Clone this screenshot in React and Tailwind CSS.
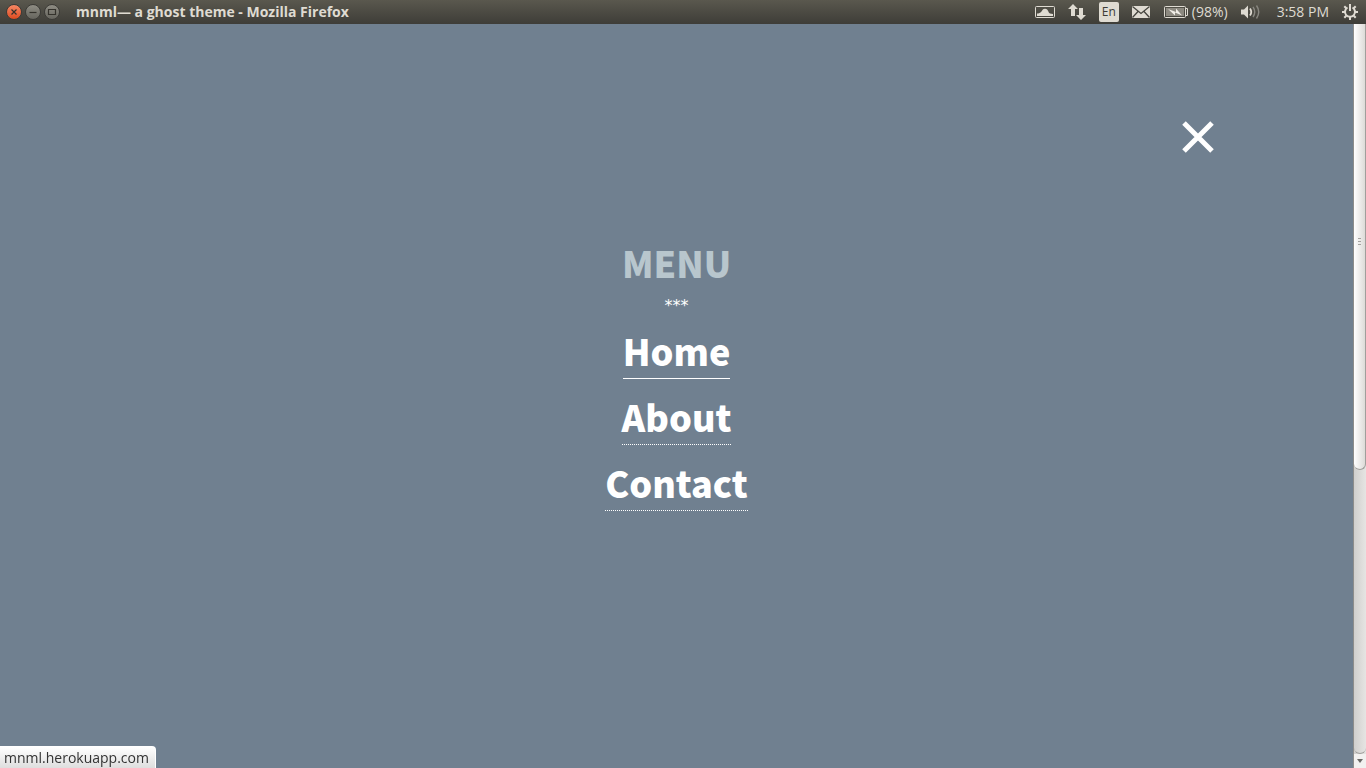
const links = [
  { label: 'Home', line: 'border-solid' },
  { label: 'About', line: 'border-dotted' },
  { label: 'Contact', line: 'border-dotted' },
];

function WindowButton({ label, tone, children }) {
  return (
    <button
      type="button"
      aria-label={label}
      className={`flex size-4 items-center justify-center rounded-full border bg-linear-to-b ${tone}`}
    >
      <svg viewBox="0 0 14 14" className="size-3.5 shrink-0" fill="none" stroke="#34322c" strokeWidth="1.2">
        {children}
      </svg>
    </button>
  );
}

function TopBar() {
  return (
    <header className="flex h-6 shrink-0 items-center justify-between bg-linear-to-b from-[#5a584e] to-[#3e3d38] pr-[7px] pl-1.5 font-['Open_Sans','Noto_Sans',sans-serif] text-sm leading-6 text-[#dfdbd2]">
      <div className="flex items-center">
        <div className="flex gap-[3px]">
          <WindowButton label="Close window" tone="border-[#3c3b37] from-[#f58763] to-[#dd4a1d]">
            <path d="M4.500 4.500l5 5M9.500 4.500l-5 5" />
          </WindowButton>
          <WindowButton label="Minimize window" tone="border-[#3c3b37] from-[#8f8d84] to-[#66655e]">
            <path d="M3.500 7.500h7" />
          </WindowButton>
          <WindowButton label="Maximize window" tone="border-[#3c3b37] from-[#8f8d84] to-[#66655e]">
            <path d="M3.500 4.500h7v5h-7z" />
          </WindowButton>
        </div>
        <h1 className="ml-4 font-bold whitespace-nowrap">mnml— a ghost theme - Mozilla Firefox</h1>
      </div>
      <div className="flex items-center whitespace-nowrap">
        <svg viewBox="0 0 20 14" className="h-3.5 w-5" aria-hidden="true">
          <rect x="0.500" y="1.500" width="19" height="11" rx="1" fill="none" stroke="#dfdbd2" />
          <path d="M2 8.500C4 8.500 5 8 6.500 6.500C8 4 9 3.500 11 4C13.500 4.500 13 7.500 15 8.500L18 9V11H2z" fill="#dfdbd2" />
        </svg>
        <svg viewBox="0 0 18 18" className="ml-[13px] size-[18px]" fill="#dfdbd2" aria-hidden="true">
          <path d="M5 1l5 5H7v7H3V6H0zM13 17l-5-5h3V5h4v7h3z" />
        </svg>
        <span className="ml-[13px] flex h-5 w-5 items-center justify-center rounded-xs bg-[#dfdbd2] text-xs text-[#3c3b37]">En</span>
        <svg viewBox="0 0 20 14" className="ml-3 h-3.5 w-5" aria-hidden="true">
          <rect x="1" y="1" width="18" height="12" fill="#dfdbd2" />
          <path d="M1.500 1.500L10 8.500L18.500 1.500M1.500 12.500L7 6.500M18.500 12.500L13 6.500" fill="none" stroke="#45443e" strokeWidth="1.300" />
        </svg>
        <svg viewBox="0 0 25 12" className="ml-[13px] h-3 w-[25px]" aria-hidden="true">
          <rect x="0.500" y="0.500" width="21" height="11" rx="1" fill="none" stroke="#dfdbd2" />
          <path d="M22 2.500h1.500v7H22" fill="none" stroke="#dfdbd2" />
          <rect x="2" y="2" width="18" height="8" fill="#8c8980" />
          <path d="M4 3l8 3V2.500l6 7-7-3v3z" fill="#f0ede6" />
        </svg>
        <span className="ml-[3px]">(98%)</span>
        <svg viewBox="0 0 20 16" className="ml-[13px] h-4 w-5" fill="none" aria-hidden="true">
          <path d="M0 5.500h3l4-4v13l-4-4H0z" fill="#dfdbd2" />
          <path d="M9 4.500q2.500 3.500 0 7" stroke="#dfdbd2" strokeWidth="1.800" />
          <path d="M12 3q3.500 5 0 10M15.500 1.500q4.500 6.500 0 13" stroke="#898780" strokeWidth="1.400" />
        </svg>
        <time className="ml-4">3:58 PM</time>
        <button type="button" aria-label="Session" className="ml-3">
          <svg viewBox="0 0 18 18" className="size-[18px]" fill="none" stroke="#dfdbd2" strokeWidth="2">
            <path d="M6.500 4.500a5 5 0 1 0 5 0M9 1v7" />
            <path d="M1 9h3M14 9h3M9 14v3M3.300 3.300l2 2M14.700 3.300l-2 2M3.300 14.700l2-2M14.700 14.700l-2-2" />
          </svg>
        </button>
      </div>
    </header>
  );
}

function ScrollBar() {
  return (
    <div aria-hidden="true" className="flex w-[13px] shrink-0 flex-col border-l border-[#8d8d8b] bg-linear-to-r from-[#d0cfcd] to-[#e6e5e3]">
      <div className="flex basis-3/5 items-center justify-center rounded-b-md border-r border-b border-[#a09f9c] bg-linear-to-r from-white to-[#dddbd8] pb-2.5">
        <svg viewBox="0 0 3 7" className="h-[7px] w-[3px]" stroke="#a4a29f">
          <path d="M0 .5h3M0 3.500h3M0 6.500h3" />
        </svg>
      </div>
      <div className="flex-1 rounded-b-md border-b border-[#a09f9c]" />
      <div className="flex h-3.5 items-center justify-center bg-[#f2f1f0]">
        <svg viewBox="0 0 6 4" className="h-1 w-1.5" fill="#6a6966">
          <path d="M0 0h6L3 4z" />
        </svg>
      </div>
    </div>
  );
}

export default function App() {
  return (
    <div className="flex min-h-screen flex-col bg-[#708090]">
      <TopBar />
      <div className="flex flex-1">
        <main className="flex flex-1 flex-col font-['Noto_Sans_CJK_JP',sans-serif] text-white">
          <div className="flex justify-end pt-24 pr-[138px]">
            <button type="button" aria-label="Close menu">
              <svg viewBox="0 0 34 34" className="size-[34px]" fill="none" stroke="white" strokeWidth="5">
                <path d="M3 3l28 28M31 3l-28 28" />
              </svg>
            </button>
          </div>
          <nav aria-label="Menu" className="mt-21 flex flex-col items-center text-4xl font-black">
            <h2 className="leading-12 text-[#b8c6cd]">MENU</h2>
            <p className="mt-2 font-['DejaVu_Sans',sans-serif] text-base leading-6 font-normal">***</p>
            <ul className="mt-3 flex flex-col items-center gap-[17px]">
              {links.map(({ label, line }) => (
                <li key={label} className="flex">
                  <a href="#" className={`border-b border-white pb-2 leading-10 ${line}`}>{label}</a>
                </li>
              ))}
            </ul>
          </nav>
        </main>
        <ScrollBar />
      </div>
      <div role="status" className="fixed bottom-0 left-0 h-[22px] rounded-tr-sm border-t border-r border-white bg-linear-to-b from-white to-[#dedede] pr-1.5 pl-1 font-['Open_Sans','Noto_Sans',sans-serif] text-sm leading-[22px] text-[#333]">
        mnml.herokuapp.com
      </div>
    </div>
  );
}
